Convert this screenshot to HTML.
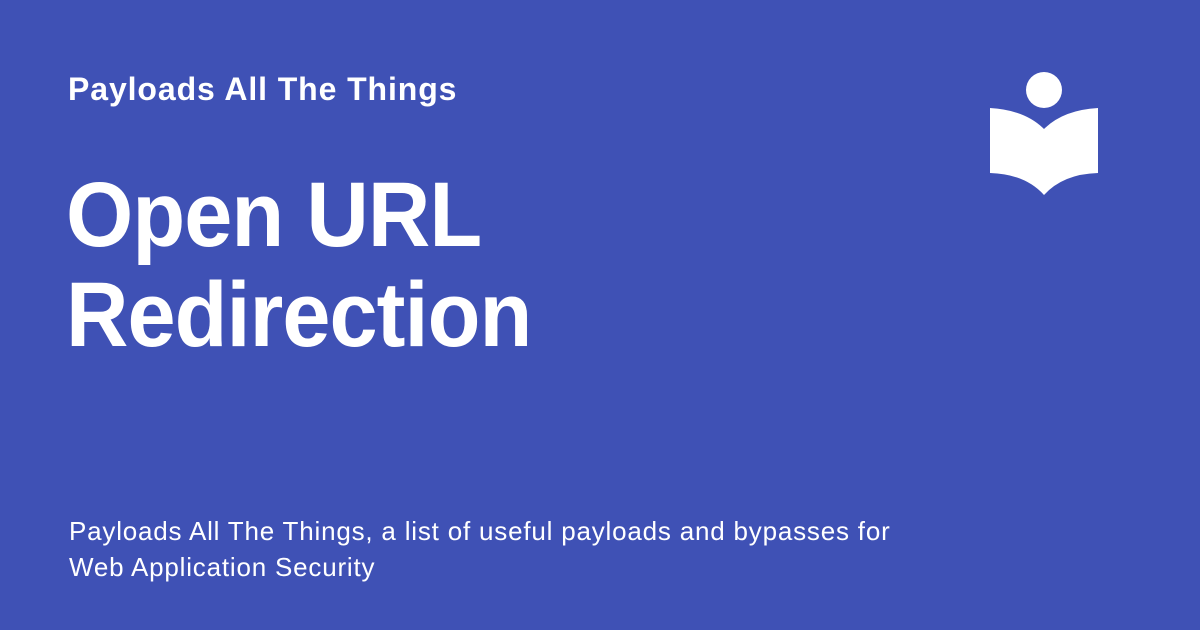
<!DOCTYPE html>
<html><head><style>
html,body{margin:0;padding:0}
body{width:1200px;height:630px;background:#3f51b5;position:relative;overflow:hidden;font-family:"Liberation Sans",Arial,sans-serif;color:#fff}
.site{position:absolute;left:68px;top:69px;font-size:32px;font-weight:bold;line-height:40px;letter-spacing:0.9px}
.title{position:absolute;left:66px;top:165px;font-size:92px;font-weight:bold;line-height:100px;letter-spacing:-1px;transform:scaleX(0.94);transform-origin:0 0}
.desc{position:absolute;left:69px;top:513px;font-size:26px;line-height:36px;letter-spacing:0.8px}
</style></head><body>
<div class="site">Payloads All The Things</div>
<div class="title">Open URL<br>Redirection</div>
<div class="desc">Payloads All The Things, a list of useful payloads and bypasses for<br>Web Application Security</div>
<svg style="position:absolute;left:0;top:0" width="1200" height="630">
<circle cx="1044" cy="90" r="18" fill="#fff"/>
<path d="M990 108 Q1025 110 1044 129 Q1063 110 1098 108 L1098 173 Q1063 174 1044 195 Q1025 174 990 173 Z" fill="#fff"/>
</svg>
</body></html>
